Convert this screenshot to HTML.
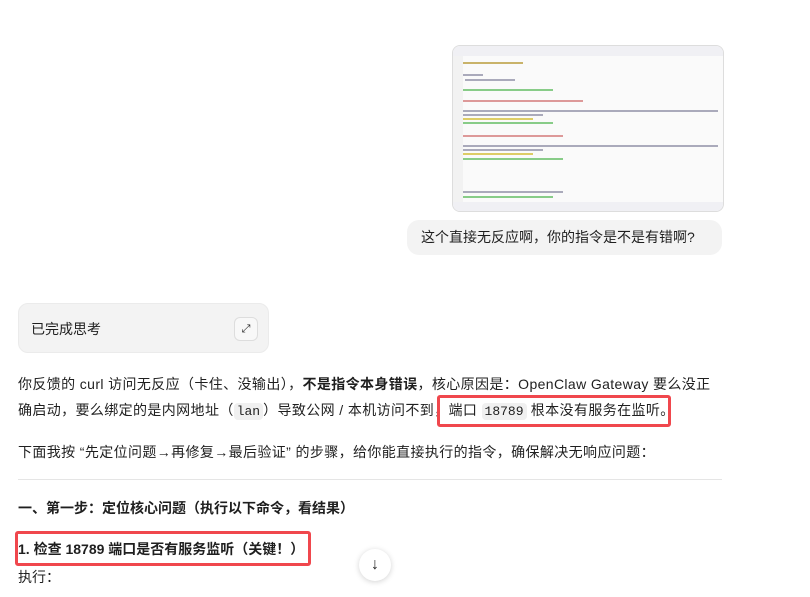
<!DOCTYPE html>
<html><head><meta charset="utf-8"><style>
body{margin:0;width:810px;height:597px;background:#fff;font-family:"Liberation Sans","Noto Sans CJK SC",sans-serif;color:#1f1f1f;overflow:hidden;position:relative;font-size:14px}
.a{position:absolute}
.shot{left:452px;top:45px;width:270px;height:165px;border:1px solid #ddd;border-radius:8px;background:#fafafa;overflow:hidden}
.ln{position:absolute;height:2px;background:#aab}
.bubble{left:407px;top:220px;width:315px;height:35px;background:#f3f3f3;border-radius:12px;line-height:35px;font-size:14px;text-indent:14px}
.think{left:18px;top:303px;width:251px;height:50px;background:#f3f3f3;border-radius:10px;border:1px solid #ebebeb;box-sizing:border-box}
code{font-family:"Liberation Mono",monospace;background:#f0f0f0;border-radius:4px;padding:1px 3px;font-size:13px;letter-spacing:0}
.p{left:18px;width:720px;line-height:26px}
.sp{letter-spacing:0.38px}
.red{border:3px solid #f0474d;border-radius:3px;box-sizing:border-box}
</style></head><body>
<div class="a shot">
 <div class="a" style="left:0;top:0;width:270px;height:10px;background:#f0f0f4"></div>
 <div class="a" style="left:0;top:10px;width:10px;height:155px;background:#f2f2f2"></div>
 <div class="ln" style="left:10px;top:16px;width:60px;background:#c9b36a"></div>
 <div class="ln" style="left:10px;top:28px;width:20px"></div>
 <div class="ln" style="left:12px;top:33px;width:50px"></div>
 <div class="ln" style="left:10px;top:43px;width:90px;background:#8c8"></div>
 <div class="ln" style="left:10px;top:54px;width:120px;background:#d99"></div>
 <div class="ln" style="left:10px;top:64px;width:255px"></div>
 <div class="ln" style="left:10px;top:68px;width:80px"></div>
 <div class="ln" style="left:10px;top:72px;width:70px;background:#dc6"></div>
 <div class="ln" style="left:10px;top:76px;width:90px;background:#8c8"></div>
 <div class="ln" style="left:10px;top:89px;width:100px;background:#d99"></div>
 <div class="ln" style="left:10px;top:99px;width:255px"></div>
 <div class="ln" style="left:10px;top:103px;width:80px"></div>
 <div class="ln" style="left:10px;top:107px;width:70px;background:#dc6"></div>
 <div class="ln" style="left:10px;top:112px;width:100px;background:#8c8"></div>
 <div class="ln" style="left:10px;top:145px;width:100px"></div>
 <div class="ln" style="left:10px;top:150px;width:90px;background:#8c8"></div>
 <div class="a" style="left:0;top:156px;width:270px;height:9px;background:#f0f0f4"></div>
</div>
<div class="a bubble">这个直接无反应啊，你的指令是不是有错啊?</div>
<div class="a think"><span class="a" style="left:12px;top:15px">已完成思考</span>
<div class="a" style="left:215px;top:13px;width:22px;height:22px;border:1px solid #ddd;border-radius:6px;background:#f8f8f8;font-size:11px;text-align:center;line-height:22px">⤢</div></div>
<div class="a p sp" style="top:371px">你反馈的 curl 访问无反应（卡住、没输出），<b>不是指令本身错误</b>，核心原因是：OpenClaw Gateway 要么没正<br>确启动，要么绑定的是内网地址（<code>lan</code>）导致公网 / 本机访问不到，端口 <code>18789</code> 根本没有服务在监听。</div>
<div class="a red" style="left:437px;top:395px;width:234px;height:32px"></div>
<div class="a p sp" style="top:439px">下面我按 “先定位问题→再修复→最后验证” 的步骤，给你能直接执行的指令，确保解决无响应问题：</div>
<div class="a" style="left:18px;top:479px;width:704px;height:1px;background:#e5e5e5"></div>
<div class="a p" style="top:495px;font-weight:bold">一、第一步：定位核心问题（执行以下命令，看结果）</div>
<div class="a red" style="left:15px;top:531px;width:296px;height:35px"></div>
<div class="a p" style="top:536px;font-weight:bold">1. 检查 18789 端口是否有服务监听（关键！）</div>
<div class="a p" style="top:564px">执行：</div>
<div class="a" style="left:359px;top:549px;width:32px;height:32px;border-radius:50%;background:#fff;box-shadow:0 1px 6px rgba(0,0,0,.18);text-align:center;line-height:32px;font-weight:bold;font-size:16px">↓</div>
</body></html>
